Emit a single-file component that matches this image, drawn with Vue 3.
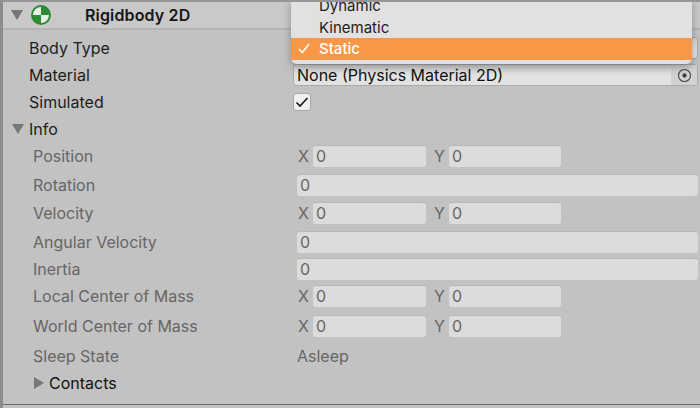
<script setup>
const rows = [
  { label: 'Position', type: 'xy', gap: 5 },
  { label: 'Rotation', type: 'one', gap: 7 },
  { label: 'Velocity', type: 'xy', gap: 6 },
  { label: 'Angular Velocity', type: 'one', gap: 7 },
  { label: 'Inertia', type: 'one', gap: 5 },
  { label: 'Local Center of Mass', type: 'xy', gap: 5 },
  { label: 'World Center of Mass', type: 'xy', gap: 8 },
]
</script>

<template>
  <div class="panel">
    <header class="head">
      <svg class="tri fold" viewBox="0 0 12 10"><path d="M0 0H12L6 10Z" /></svg>
      <svg class="logo" viewBox="0 0 20 20">
        <circle cx="10" cy="10" r="9" fill="#e8efe8" stroke="#2f8a36" stroke-width="2" />
        <path d="M10 1a9 9 0 0 1 9 9h-9zM10 10v9a9 9 0 0 1-9-9z" fill="#2f8a36" />
      </svg>
      <span class="title">Rigidbody 2D</span>
    </header>

    <div class="row first">
      <span class="label">Body Type</span>
      <div class="field body-type"></div>
    </div>
    <div class="row s5">
      <span class="label">Material</span>
      <div class="field material">
        <span>None (Physics Material 2D)</span>
        <span class="picker">
          <svg viewBox="0 0 14 14" width="15" height="15">
            <circle cx="7" cy="7" r="5.6" fill="none" stroke="#4a4a4a" stroke-width="1.1" />
            <circle cx="7" cy="7" r="2" fill="#3c3c3c" />
          </svg>
        </span>
      </div>
    </div>
    <div class="row s5">
      <span class="label">Simulated</span>
      <span class="check">
        <svg viewBox="0 0 14 12" width="14" height="12"><path d="M1.5 6.5L5 10L12.5 2" fill="none" stroke="#1c1c1c" stroke-width="1.7" /></svg>
      </span>
    </div>
    <div class="row s5 info">
      <svg class="tri" viewBox="0 0 12 10"><path d="M0 0H12L6 10Z" /></svg>
      <span>Info</span>
    </div>

    <div v-for="r in rows" :key="r.label" class="row dim" :style="{ marginTop: r.gap + 'px' }">
      <span class="label sub">{{ r.label }}</span>
      <div v-if="r.type === 'xy'" class="xy">
        <span class="axis">X</span><div class="input short">0</div>
        <span class="axis y">Y</span><div class="input short">0</div>
      </div>
      <div v-else class="input wide">0</div>
    </div>

    <div class="row dim s8">
      <span class="label sub">Sleep State</span>
      <span class="asleep">Asleep</span>
    </div>
    <div class="row s5 contacts">
      <svg class="tri-r" viewBox="0 0 10 12"><path d="M0 0V12L10 6Z" /></svg>
      <span>Contacts</span>
    </div>

    <div class="menu">
      <div class="item">Dynamic</div>
      <div class="item">Kinematic</div>
      <div class="item active">
        <svg class="tick" viewBox="0 0 12 11" width="12" height="11"><path d="M1 6L4.2 9.5L11 1" fill="none" stroke="#fff" stroke-width="1.6" /></svg>
        Static
      </div>
    </div>
  </div>
</template>

<style>
html, body { margin: 0; background: #c2c2c2; }
</style>

<style scoped>
.panel {
  position: relative;
  width: 700px;
  height: 408px;
  box-sizing: border-box;
  overflow: hidden;
  background: #c2c2c2;
  border-left: 3px solid #8c8c8c;
  border-top: 2px solid #969696;
  font-family: Inter, "Liberation Sans", sans-serif;
  font-size: 16px;
  color: #1d1d1d;
}
.panel::after {
  content: "";
  position: absolute;
  left: 0;
  right: 0;
  bottom: 3px;
  height: 1px;
  background: #6f6f6f;
}
.head {
  height: 26px;
  display: flex;
  align-items: center;
  background: #c9c9c9;
  border-bottom: 2px solid #b4b4b4;
}
.tri, .tri-r { fill: #777; flex: none; }
.tri { width: 12px; height: 10px; }
.fold { margin-left: 8px; }
.logo { width: 20px; height: 20px; margin-left: 8px; }
.title { margin-left: 34px; font-weight: 600; font-size: 16px; letter-spacing: 0.15px; color: #161616; }
.row { height: 22px; display: flex; align-items: center; }
.first { margin-top: 7px; }
.s5 { margin-top: 5px; }
.s8 { margin-top: 8px; }
.label { width: 264px; margin-left: 26px; flex: none; }
.sub { width: 264px; margin-left: 30px; margin-right: -4px; color: #666; }
.field {
  box-sizing: border-box;
  height: 22px;
  width: 405px;
  display: flex;
  align-items: center;
  justify-content: space-between;
  padding-left: 3px;
  margin-right: 2px;
  border-radius: 3px;
  border: 1px solid #aaa;
  background: linear-gradient(#cfcfcf, #e2e2e2 45%);
  color: #111;
}
.picker {
  width: 26px;
  height: 20px;
  display: flex;
  align-items: center;
  justify-content: center;
  background: #d2d2d2;
}
.check {
  box-sizing: border-box;
  width: 18px;
  height: 18px;
  display: flex;
  align-items: center;
  justify-content: center;
  background: #f0f0f0;
  border: 1px solid #a8a8a8;
  border-radius: 3px;
}
.info { padding-left: 9px; gap: 5px; }
.dim { color: #666; }
.xy { display: flex; align-items: center; margin-left: 5px; }
.axis { width: 15px; flex: none; }
.axis.y { width: 15px; margin-left: 8px; }
.input {
  box-sizing: border-box;
  height: 22px;
  padding-left: 3px;
  background: #dcdcdc;
  border-radius: 3px;
  border-top: 1px solid #b8b8b8;
  line-height: 20px;
}
.short { width: 113px; }
.short:last-child { width: 112px; }
.wide { width: 401px; margin-left: 4px; }
.asleep { margin-left: 4px; }
.contacts { padding-left: 31px; gap: 5px; color: #111; }
.tri-r { width: 10px; height: 12px; }
.menu {
  position: absolute;
  left: 288px;
  top: -2px;
  width: 401px;
  height: 64px;
  box-sizing: border-box;
  background: #e1e1e1;
  border-radius: 0 0 6px 6px;
  box-shadow: 0 3px 8px rgba(0, 0, 0, 0.3);
  color: #222;
  font-size: 15px;
}
.item { height: 21px; padding-left: 28px; line-height: 22px; position: relative; }
.item:first-child { margin-top: -5px; height: 22px; }
.active {
  height: 22px;
  line-height: 21px;
  background: #f99746;
  color: #fff;
  font-weight: 500;
}
.tick { position: absolute; left: 7px; top: 5px; }
</style>
